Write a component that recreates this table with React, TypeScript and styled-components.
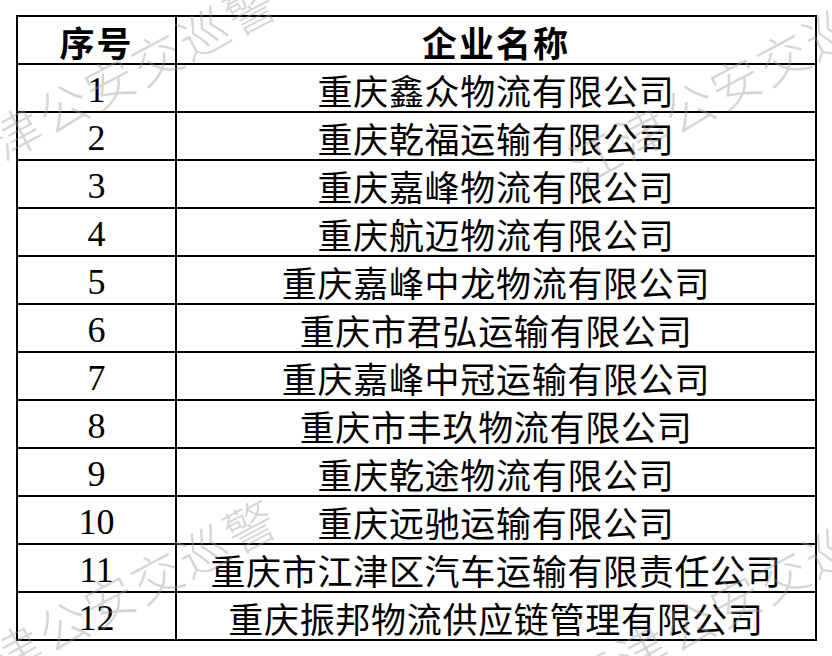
import styled, { createGlobalStyle } from "styled-components";

const companies = [
  "重庆鑫众物流有限公司",
  "重庆乾福运输有限公司",
  "重庆嘉峰物流有限公司",
  "重庆航迈物流有限公司",
  "重庆嘉峰中龙物流有限公司",
  "重庆市君弘运输有限公司",
  "重庆嘉峰中冠运输有限公司",
  "重庆市丰玖物流有限公司",
  "重庆乾途物流有限公司",
  "重庆远驰运输有限公司",
  "重庆市江津区汽车运输有限责任公司",
  "重庆振邦物流供应链管理有限公司",
];

// watermark tiles repeat every 626 x 518
const marks = [
  { x: 0, y: 0 },
  { x: 626, y: 0 },
  { x: 0, y: 518 },
  { x: 626, y: 518 },
];

const GlobalStyle = createGlobalStyle`
  html, body {
    margin: 0;
    padding: 0;
    background: #ffffff;
  }
  body {
    width: 832px;
    height: 656px;
    overflow: hidden;
    font-family: "Noto Sans CJK SC", sans-serif;
  }
`;

const Page = styled.div`
  position: relative;
  width: 832px;
  height: 656px;
  padding: 15px 0 0 16px;
  box-sizing: border-box;
  overflow: hidden;
`;

const Table = styled.div`
  display: grid;
  grid-template-columns: 159px 640px;
  width: 801px;
  border-top: 2px solid #000;
  border-left: 2px solid #000;
  box-sizing: border-box;
`;

const Cell = styled.div<{ $head?: boolean; $num?: boolean }>`
  height: 48px;
  box-sizing: border-box;
  border-right: 2px solid #000;
  border-bottom: 2px solid #000;
  display: flex;
  align-items: center;
  justify-content: center;
  padding-top: 3px;
  color: #000;
  white-space: nowrap;
  font-size: ${(p) => (p.$num ? "36px" : "35px")};
  font-weight: ${(p) => (p.$head ? 700 : 400)};
  letter-spacing: ${(p) => (p.$num ? "0" : p.$head ? "2px" : "0.7px")};
  font-family: ${(p) =>
    p.$num
      ? `"Liberation Serif", "Times New Roman", serif`
      : `"Noto Sans CJK SC", sans-serif`};
`;

const Watermark = styled.div`
  position: absolute;
  inset: 0;
  pointer-events: none;
`;

const Mark = styled.span`
  position: absolute;
  height: 50px;
  line-height: 50px;
  font-size: 50px;
  letter-spacing: 3px;
  white-space: nowrap;
  color: rgba(150, 150, 150, 0.4);
  font-family: "Noto Sans CJK SC", sans-serif;
  font-weight: 300;
  transform-origin: 0 50%;
  transform: rotate(-28deg);
`;

export default function App() {
  return (
    <>
      <GlobalStyle />
      <Page>
        <Table>
          <Cell $head>序号</Cell>
          <Cell $head>企业名称</Cell>
          {companies.map((name, i) => (
            <>
              <Cell key={`n${i}`} $num>
                {i + 1}
              </Cell>
              <Cell key={`c${i}`}>{name}</Cell>
            </>
          ))}
        </Table>
        <Watermark>
          {marks.map((m, i) => (
            <Mark key={i} style={{ left: -54 + m.x, top: 142 + m.y }}>
              江津公安交巡警
            </Mark>
          ))}
        </Watermark>
      </Page>
    </>
  );
}
